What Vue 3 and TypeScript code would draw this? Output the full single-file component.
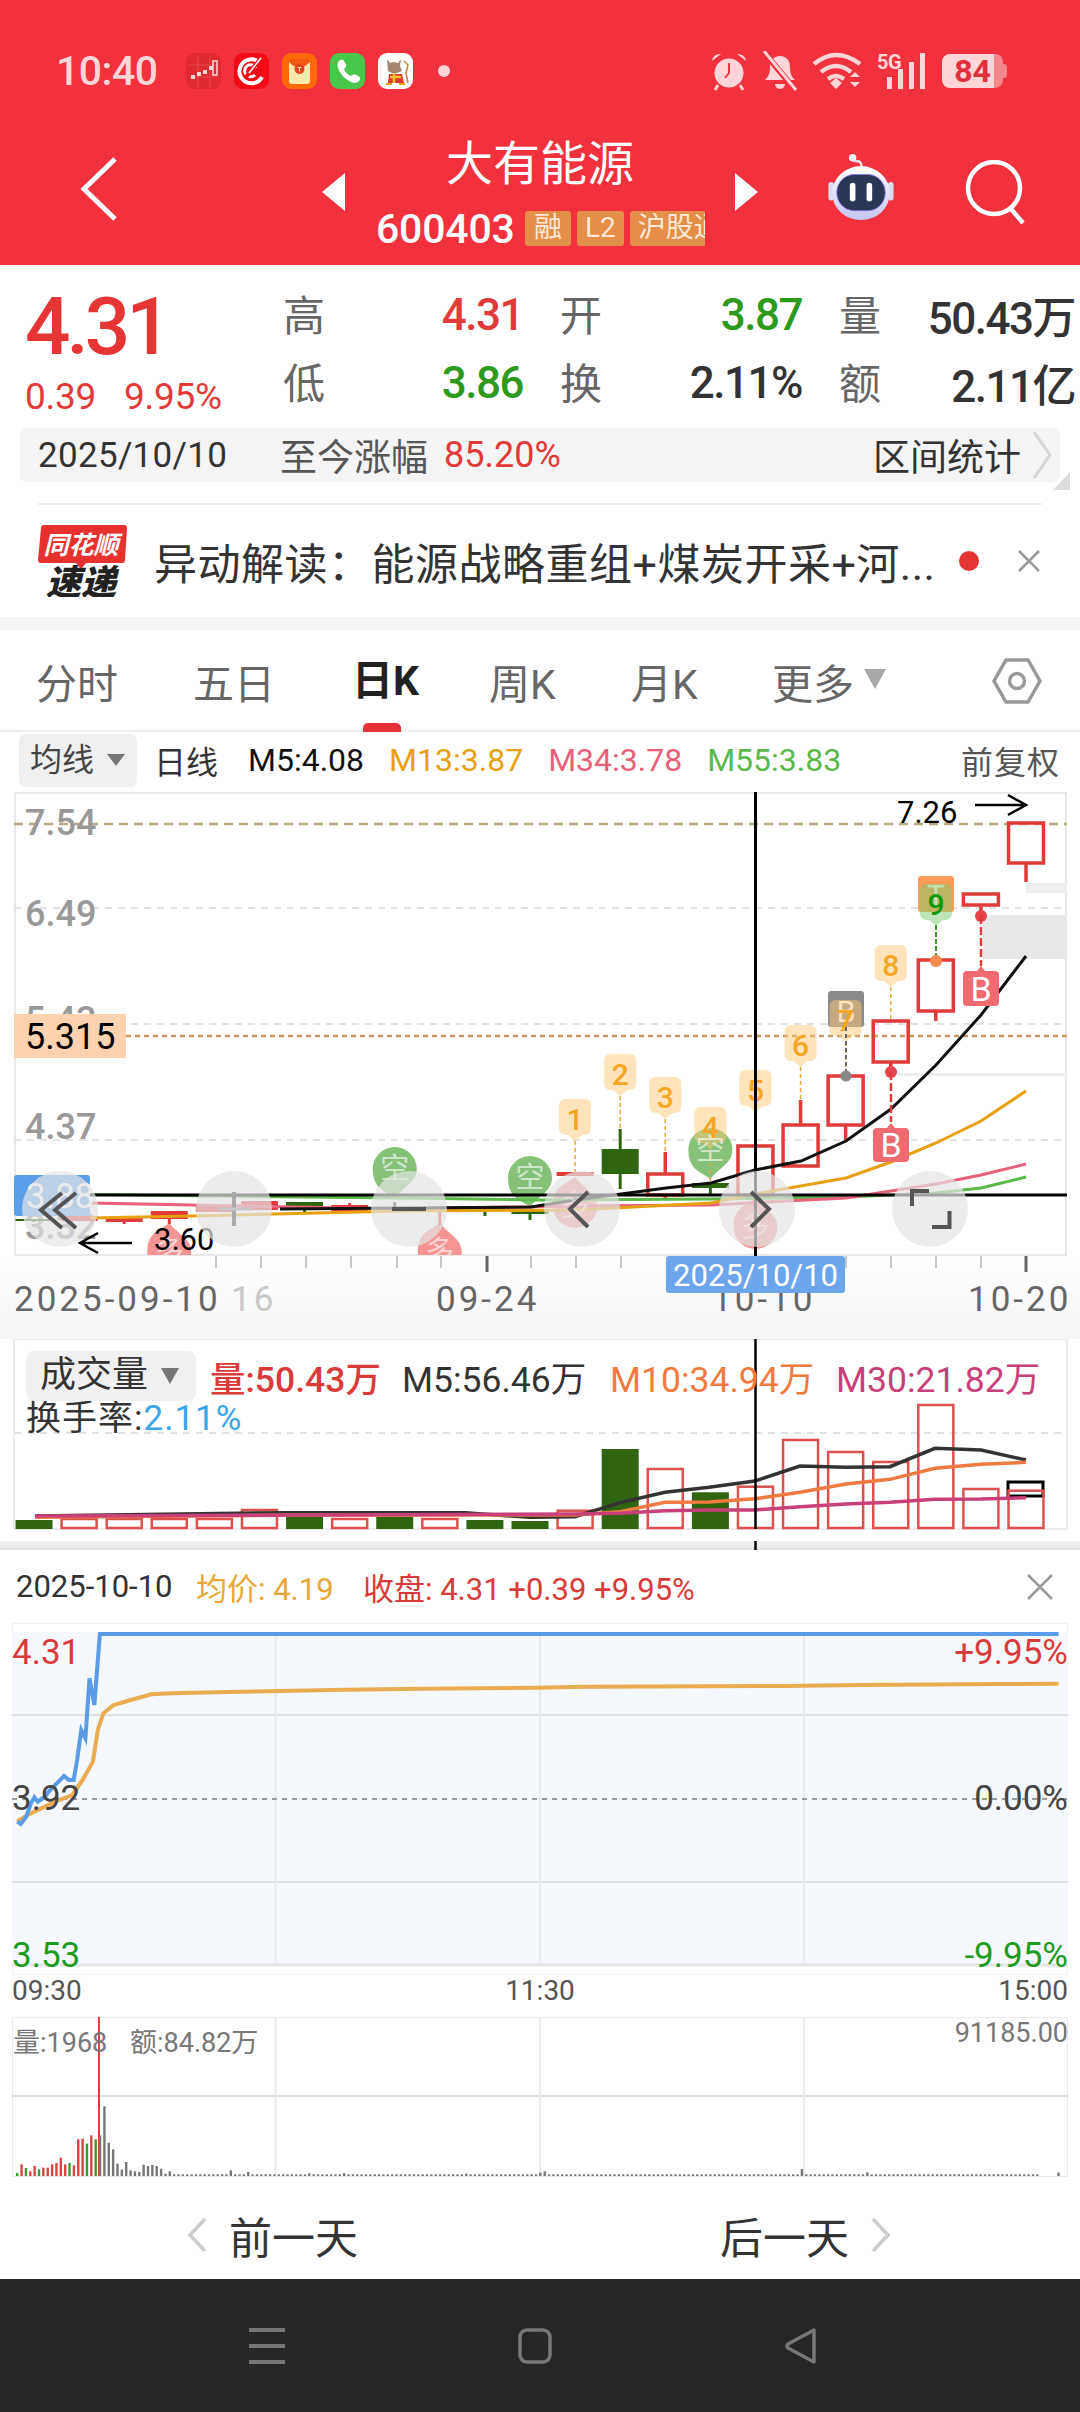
<script setup lang="ts">
type P = [number, number]
const pts = (a: P[]) => a.map((p) => p.join(',')).join(' ')
const cx = (i: number) => 1026 - 45.09 * (22 - i)

const grid = [
  { y: 908 },
  { y: 1024 },
  { y: 1140 },
]

const solid = [
  { i: 0, t: 1219, b: 1221, hi: 1219, lo: 1222, c: '#2f6410' },
  { i: 1, t: 1216, b: 1221, hi: 1216, lo: 1221, c: '#e03a3a' },
  { i: 2, t: 1218, b: 1222, hi: 1218, lo: 1224, c: '#e03a3a' },
  { i: 3, t: 1211, b: 1219, hi: 1211, lo: 1224, c: '#e03a3a' },
  { i: 4, t: 1205, b: 1212, hi: 1205, lo: 1212, c: '#e03a3a' },
  { i: 5, t: 1201, b: 1210, hi: 1201, lo: 1210, c: '#e03a3a' },
  { i: 6, t: 1202, b: 1206, hi: 1202, lo: 1213, c: '#2f6410' },
  { i: 7, t: 1205, b: 1211, hi: 1203, lo: 1211, c: '#e03a3a' },
  { i: 8, t: 1208, b: 1211, hi: 1202, lo: 1211, c: '#333333' },
  { i: 9, t: 1207, b: 1210, hi: 1207, lo: 1225, c: '#e03a3a' },
  { i: 10, t: 1206, b: 1209, hi: 1206, lo: 1216, c: '#2f6410' },
  { i: 11, t: 1211, b: 1214, hi: 1211, lo: 1220, c: '#2f6410' },
  { i: 12, t: 1172, b: 1176, hi: 1172, lo: 1176, c: '#e03a3a' },
  { i: 13, t: 1149, b: 1174, hi: 1129, lo: 1189, c: '#2f6410' },
  { i: 15, t: 1183, b: 1188, hi: 1183, lo: 1194, c: '#2f6410' },
].map((c) => ({ ...c, x: cx(c.i) }))

const hollow = [
  { i: 14, t: 1174, b: 1195, hi: 1152, lo: 1199 },
  { i: 16, t: 1146, b: 1195, hi: 1146, lo: 1195 },
  { i: 17, t: 1125, b: 1166, hi: 1100, lo: 1167 },
  { i: 18, t: 1076, b: 1125, hi: 1076, lo: 1142 },
  { i: 19, t: 1021, b: 1062, hi: 1021, lo: 1072 },
  { i: 20, t: 960, b: 1011, hi: 960, lo: 1021 },
  { i: 21, t: 894, b: 905, hi: 894, lo: 916 },
  { i: 22, t: 823, b: 863, hi: 823, lo: 882 },
].map((c) => ({ ...c, x: cx(c.i) }))

const ma5: P[] = [[280, 1209], [400, 1208], [531, 1207], [575, 1200], [621, 1194], [666, 1188], [711, 1183], [755, 1170], [801, 1161], [846, 1141], [891, 1109], [936, 1065], [981, 1015], [1026, 956]]
const ma13: P[] = [[90, 1218], [190, 1216], [400, 1211], [575, 1210], [711, 1203], [755, 1194], [846, 1178], [891, 1162], [936, 1143], [981, 1121], [1026, 1091]]
const ma34: P[] = [[90, 1203], [400, 1209], [575, 1206], [711, 1205], [846, 1198], [936, 1184], [981, 1175], [1026, 1164]]
const ma55: P[] = [[60, 1194], [300, 1197], [400, 1198], [540, 1200], [711, 1199], [846, 1197], [936, 1193], [981, 1188], [1026, 1177]]

const tagPath = (x: number, y: number) =>
  `M${x - 10} ${y}h20a6 6 0 0 1 6 6v24a6 6 0 0 1-6 6h-3l-7 6-7-6h-3a6 6 0 0 1-6-6v-24a6 6 0 0 1 6-6z`
const tags = [
  { n: '1', i: 12, y: 1099, to: 1172 },
  { n: '2', i: 13, y: 1054, to: 1129 },
  { n: '3', i: 14, y: 1077, to: 1152 },
  { n: '4', i: 15, y: 1107, to: 1183 },
  { n: '5', i: 16, y: 1070, to: 1146 },
  { n: '6', i: 17, y: 1025, to: 1100 },
  { n: '7', i: 18, y: 1000, to: 1076 },
  { n: '8', i: 19, y: 945, to: 1020 },
].map((t) => ({ ...t, x: cx(t.i), d: tagPath(cx(t.i), t.y) }))

const bubble = (x: number, y: number, r: number) =>
  `M${x - r} ${y}a${r} ${r} 0 1 1 ${2 * r} 0c0 ${r * 0.6}-${r * 0.6} ${r * 0.8}-${r} ${r + 7}c-${r * 0.4}-7-${r}-${r * 0.4}-${r}-${r + 7}z`
const duoPath = (x: number, y: number, r: number) =>
  `M${x - r} ${y}a${r} ${r} 0 1 0 ${2 * r} 0c0-${r * 0.6}-${r * 0.6}-${r * 0.8}-${r}-${r + 7}c-${r * 0.4} 7-${r} ${r * 0.4}-${r} ${r + 7}z`
const kong = [
  { x: cx(8), y: 1169 },
  { x: cx(11), y: 1178 },
  { x: cx(15), y: 1150 },
].map((b) => ({ ...b, d: bubble(b.x, b.y, 22) }))
const duo = [
  { x: cx(3), y: 1252 },
  { x: cx(9), y: 1252 },
  { x: cx(12), y: 1206 },
  { x: cx(16), y: 1227 },
].map((b) => ({ ...b, d: duoPath(b.x, b.y, 22) }))

const circles = [60, 234, 409, 582, 757, 930]

const volTops = [1520, 1519, 1519, 1519, 1519, 1510, 1516.7, 1519, 1516.7, 1519, 1520, 1521, 1510.7, 1449, 1469, 1492.3, 1486.7, 1440, 1452, 1462, 1405, 1489, 1490.7]
const volGreen = [0, 6, 8, 10, 11, 13, 15]
const volBars = volTops.map((t, i) => ({
  x: cx(i) - 18.5,
  y: t,
  h: 1529 - t,
  green: volGreen.includes(i),
}))
const vy = (z: number) => 1320 + z / 3
const volM5: P[] = ([[35, 588], [287, 578], [465, 578], [530, 592], [575, 590], [620, 548], [665, 517], [709, 502], [755, 483], [800, 438], [846, 442], [890, 440], [935, 385], [981, 390], [1026, 420]] as P[]).map(([x, z]) => [x, vy(z)])
const volM10: P[] = ([[35, 592], [300, 585], [530, 585], [575, 585], [620, 575], [665, 547], [709, 546], [755, 536], [800, 517], [846, 492], [890, 478], [935, 445], [981, 433], [1026, 427]] as P[]).map(([x, z]) => [x, vy(z)])
const volM30: P[] = ([[35, 588], [575, 582], [620, 580], [665, 572], [709, 570], [755, 570], [800, 560], [846, 552], [890, 547], [935, 538], [981, 537], [1026, 533]] as P[]).map(([x, z]) => [x, vy(z)])

const day = (a: P[]): P[] => a.map(([x, z]) => [x / 1.452, 1540 + z / 3])
const price = day([[25, 845], [30, 852], [38, 830], [45, 790], [50, 772], [55, 785], [65, 770], [75, 745], [85, 725], [93, 708], [100, 720], [107, 720], [112, 660], [118, 570], [124, 595], [130, 415], [137, 495], [145, 282], [1537, 282]])
const avg = day([[25, 845], [40, 825], [60, 805], [80, 785], [105, 765], [120, 720], [135, 665], [142, 570], [150, 520], [165, 495], [190, 480], [220, 463], [250, 460], [330, 456], [480, 450], [610, 446], [780, 443], [850, 440], [1140, 438], [1250, 435], [1450, 432], [1537, 431]])

const firstTops = [518, 492, 503, 513, 497, 507, 502, 502, 492, 488, 472, 492, 488, 495, 417, 415, 430, 405, 417, 405, 318, 427, 447, 490, 508, 485, 510, 513, 515, 493, 497, 494, 497, 505, 520, 513]
const firstCol = 'grgrrgrrrrrrgrrrgrg'
const bumps: Record<number, number> = { 333: 510, 358: 515, 452: 519, 497: 519, 680: 520, 787: 517, 793: 513, 1165: 506, 1258: 516 }
const dayBars: { x: number; h: number; c: string }[] = []
for (let i = 0; i < 235; i++) {
  const zx = 25 + i * 6.33
  if (zx > 1520) break
  let top = 522
  if (i < firstTops.length) top = firstTops[i]
  for (const k of Object.keys(bumps)) {
    if (Math.abs(Number(k) - zx) < 3.2) top = bumps[Number(k)]
  }
  const ch = firstCol[i]
  dayBars.push({
    x: zx / 1.452 - 1.2,
    h: (527 - top) / 3,
    c: ch === 'g' ? '#3b9a2d' : ch === 'r' ? '#d94444' : '#777777',
  })
}
dayBars.push({ x: 1537 / 1.452 - 1.2, h: 3.5, c: '#777777' })
</script>

<template>
  <div class="page">
    <header class="head">
      <div class="status">
        <div class="status-left">
          <span class="time">10:40</span>
          <svg class="app first" viewBox="0 0 35 36">
            <rect width="35" height="36" rx="9" fill="#df2a30" />
            <path d="M3 12h30M3 24h30M12 2v32M24 2v32" stroke="#e8474c" stroke-width="1" />
            <path d="M5 24h4M11 21h4M17 19h4M23 15h4" stroke="#ffd6d6" stroke-width="4" />
            <rect x="27" y="8" width="4" height="14" fill="none" stroke="#ffd6d6" stroke-width="1.5" />
          </svg>
          <svg class="app" viewBox="0 0 35 36">
            <rect width="35" height="36" rx="9" fill="#f40a14" />
            <path d="M25 9a12 12 0 1 0 3 15" fill="none" stroke="#fff" stroke-width="4" />
            <path d="M22 15a6 6 0 1 0-1 7" fill="none" stroke="#fff" stroke-width="3" />
            <path d="M12 24L27 5" stroke="#f40a14" stroke-width="4" />
            <path d="M15 20L27 5" stroke="#fff" stroke-width="1.6" />
          </svg>
          <svg class="app" viewBox="0 0 35 36">
            <rect width="35" height="36" rx="9" fill="#ff6a06" />
            <rect x="7" y="6" width="21" height="25" rx="3" fill="#ffe9ad" />
            <path d="M7 9q10 11 21 0V8a2 2 0 0 0-2-2H9a2 2 0 0 0-2 2z" fill="#f65a12" />
            <circle cx="17.5" cy="16" r="5" fill="#e8421a" />
            <path d="M15.5 14.500h4M17.500 14.500v4" stroke="#ffe9ad" stroke-width="1.200" />
          </svg>
          <svg class="app" viewBox="0 0 35 36">
            <rect width="35" height="36" rx="9" fill="#48c74a" />
            <path d="M9 8c2-2 4-2 5 0l2 4c.5 1 0 2-1 3l-1 1c1 3 4 6 7 7l1.500-1c1-1 2-1 3-.5l3.500 2c1.500 1 1.500 3 0 4.500-2 2-5 2.500-8 1-6-3-11-8-13-14-1-3-.5-5.500 1-7z" fill="#fff" />
          </svg>
          <svg class="app" viewBox="0 0 35 36">
            <rect width="35" height="36" rx="9" fill="#fff" />
            <path d="M9 6l3 4 3-1 5 1 3-4-1 7 2 5-8 3-6-3z" fill="#a28570" />
            <path d="M11 21h13l2 9H10z" fill="#e0352a" />
            <path d="M12 24h11M16 20v10" stroke="#f5c431" stroke-width="2.500" />
            <path d="M26 8l4 4-2 8 2 10" stroke="#b98a3a" stroke-width="1.500" fill="none" />
            <path d="M8 31h6M21 31h6" stroke="#e8a020" stroke-width="2" />
          </svg>
          <span class="sdot"></span>
        </div>
        <div class="status-right">
          <svg class="si alarm" viewBox="0 0 38 40">
            <circle cx="19" cy="22" r="14.500" fill="#ffd5d8" />
            <path d="M19 12v10l-4 5" stroke="#f1313c" stroke-width="2" fill="none" />
            <path d="M2 10a8 8 0 0 1 9-7zM36 10a8 8 0 0 0-9-7z" fill="#ffd5d8" />
            <path d="M8 34l-3 5M30 34l3 5" stroke="#ffd5d8" stroke-width="3" />
          </svg>
          <svg class="si bell" viewBox="0 0 36 40">
            <path d="M8 16c0-7 4-11 10-11s10 4 10 11c0 7 2 10 5 13H3c3-3 5-6 5-13z" fill="#ffd5d8" />
            <path d="M13 33a5 5 0 0 0 10 0z" fill="#ffd5d8" />
            <path d="M1 0l33 40" stroke="#f1313c" stroke-width="6" />
            <path d="M2 0l32 39" stroke="#ffd5d8" stroke-width="3" />
          </svg>
          <svg class="si wifi" viewBox="0 0 50 38">
            <path d="M2 12q22-18 46 0M9 20q15-12 30 0M16 27q8-6 16 0" fill="none" stroke="#ffd5d8" stroke-width="4.500" />
            <path d="M18 31l6-5 6 5-6 6z" fill="#ffd5d8" />
            <path d="M38 25l5-5 5 5zM38 30l5 5 5-5z" fill="#ffd5d8" />
          </svg>
          <div class="net">
            <span class="five">5G</span>
            <svg class="bars" viewBox="0 0 48 36">
              <rect x="10" y="24" width="5" height="12" fill="#ffd5d8" />
              <rect x="21" y="16" width="5" height="20" fill="#ffd5d8" />
              <rect x="32" y="9" width="5" height="27" fill="#ffd5d8" />
              <rect x="43" y="0" width="5" height="36" fill="#ffd5d8" />
            </svg>
          </div>
          <div class="batt">84</div>
        </div>
      </div>
      <div class="nav">
        <svg class="back" viewBox="0 0 38 64">
          <path d="M35 2L4 32l31 30" fill="none" stroke="#fff" stroke-width="5" />
        </svg>
        <svg class="tri-l" viewBox="0 0 23 38"><path d="M23 0v38L0 19z" fill="#fff" /></svg>
        <div class="center">
          <div class="title">大有能源</div>
          <div class="code-row">
            <span class="code">600403</span>
            <span class="tag">融</span>
            <span class="tag">L2</span>
            <span class="tag">沪股通</span>
          </div>
        </div>
        <svg class="tri-r" viewBox="0 0 23 38"><path d="M0 0v38l23-19z" fill="#fff" /></svg>
        <svg class="robot" viewBox="0 0 72 72">
          <defs>
            <linearGradient id="rb" x1="0" y1="0" x2="0" y2="1">
              <stop offset="0" stop-color="#ffffff" />
              <stop offset="1" stop-color="#c4c6f2" />
            </linearGradient>
          </defs>
          <path d="M30 8q-6-4-3-7M30 8q6-2 7 6" fill="none" stroke="#e8e8f4" stroke-width="2.500" />
          <circle cx="27" cy="4" r="4" fill="#eeeef8" />
          <rect x="1" y="30" width="6" height="20" rx="3" fill="#dcdcf0" />
          <rect x="65" y="30" width="6" height="20" rx="3" fill="#dcdcf0" />
          <ellipse cx="36" cy="42" rx="31" ry="29" fill="url(#rb)" />
          <rect x="10" y="22" width="52" height="39" rx="19" fill="#2a3656" stroke="#8f7ae8" stroke-width="1" />
          <rect x="24" y="31" width="6" height="20" rx="3" fill="#fff" />
          <rect x="42" y="31" width="6" height="20" rx="3" fill="#fff" />
        </svg>
        <svg class="search" viewBox="0 0 62 64">
          <circle cx="30" cy="28" r="26" fill="none" stroke="#fff" stroke-width="4.500" />
          <path d="M47 49l12 14" stroke="#fff" stroke-width="4.500" />
        </svg>
      </div>
    </header>

    <section class="quote">
      <div class="summary">
        <div class="now">
          <div class="big">4.31</div>
          <div class="chg"><span>0.39</span><span>9.95%</span></div>
        </div>
        <div class="stats">
          <div class="cell"><span class="lb">高</span><span class="val red">4.31</span></div>
          <div class="cell"><span class="lb">开</span><span class="val green">3.87</span></div>
          <div class="cell"><span class="lb">量</span><span class="val">50.43万</span></div>
          <div class="cell"><span class="lb">低</span><span class="val green">3.86</span></div>
          <div class="cell"><span class="lb">换</span><span class="val">2.11%</span></div>
          <div class="cell"><span class="lb">额</span><span class="val">2.11亿</span></div>
        </div>
      </div>
      <div class="range">
        <span class="r-date">2025/10/10</span>
        <span class="r-lb">至今涨幅</span>
        <span class="r-pct">85.20%</span>
        <span class="r-stat">区间统计</span>
        <svg class="r-chev" viewBox="0 0 20 50"><path d="M2 2l16 23L2 48" fill="none" stroke="#d6d6d6" stroke-width="3" /></svg>
        <span class="r-corner"></span>
      </div>
      <div class="rule"></div>
      <div class="news">
        <svg class="logo" viewBox="0 0 90 72">
          <path d="M6 0h80q3 0 3 3l-2 32q0 3-3 3H48l-5 6-5-6H3q-3 0-3-3L3 3q0-3 3-3z" fill="#e5322f" />
          <text class="logo-a" x="43" y="29" text-anchor="middle">同花顺</text>
          <text class="logo-b" x="43" y="70" text-anchor="middle">速递</text>
        </svg>
        <span class="news-text">异动解读：能源战略重组+煤炭开采+河...</span>
        <span class="news-dot"></span>
        <svg class="news-x" viewBox="0 0 24 24"><path d="M2 2l20 20M22 2L2 22" stroke="#999" stroke-width="2.500" /></svg>
      </div>
    </section>
    <div class="band"></div>

    <nav class="tabs">
      <span class="tab">分时</span>
      <span class="tab">五日</span>
      <span class="tab on">日K<i class="under"></i></span>
      <span class="tab">周K</span>
      <span class="tab">月K</span>
      <span class="tab">更多<i class="more-tri"></i></span>
      <svg class="hex" viewBox="0 0 50 46">
        <path d="M14 2h22l12 21-12 21H14L2 23z" fill="none" stroke="#999" stroke-width="3.500" />
        <circle cx="25" cy="23" r="7.500" fill="none" stroke="#999" stroke-width="3.500" />
      </svg>
    </nav>

    <div class="legend">
      <span class="ma-btn">均线<i class="dd"></i></span>
      <span class="lg-day">日线</span>
      <span class="lg m5">M5:4.08</span>
      <span class="lg m13">M13:3.87</span>
      <span class="lg m34">M34:3.78</span>
      <span class="lg m55">M55:3.83</span>
      <span class="fq">前复权</span>
    </div>

    <svg class="kchart" viewBox="0 788 1080 551">
      <defs>
        <linearGradient id="axisbg" x1="0" y1="0" x2="0" y2="1">
          <stop offset="0" stop-color="#ffffff" />
          <stop offset="1" stop-color="#f6f6f6" />
        </linearGradient>
        <clipPath id="plot"><rect x="14" y="792" width="1053" height="463" /></clipPath>
      </defs>
      <rect x="0" y="1255" width="1080" height="84" fill="url(#axisbg)" />
      <rect x="15" y="793" width="1051" height="462" fill="#fff" stroke="#e8e8e8" stroke-width="2" />
      <rect x="983" y="915" width="84" height="44" fill="#e8e8e8" />
      <rect x="1026" y="883" width="41" height="10" fill="#eeeeee" />
      <rect x="895" y="1073" width="172" height="3" fill="#eeeeee" />
      <line v-for="g in grid" :key="g.y" x1="14" x2="1067" :y1="g.y" :y2="g.y" class="dash-g" />
      <line x1="14" x2="1067" y1="824" y2="824" class="dash-top" />
      <text class="yl" x="25" y="835">7.54</text>
      <text class="yl" x="25" y="926">6.49</text>
      <text class="yl" x="25" y="1032">5.43</text>
      <text class="yl" x="25" y="1139">4.37</text>
      <text class="yl" x="25" y="1239">3.32</text>
      <line x1="126" x2="1067" y1="1036" y2="1036" class="dash-or" />
      <rect x="14" y="1014" width="112" height="44" fill="#ffd3b0" />
      <text class="y-hi" x="25" y="1049">5.315</text>

      <g clip-path="url(#plot)">
        <path v-for="k in kong" :key="k.x" :d="k.d" fill="#85c277" />
        <path v-for="d in duo" :key="d.x" :d="d.d" fill="#f49494" />

        <g v-for="c in solid" :key="c.i">
          <line :x1="c.x" :x2="c.x" :y1="c.hi" :y2="c.lo" :stroke="c.c" stroke-width="3" />
          <rect :x="c.x - 18.500" :y="c.t" width="37" :height="c.b - c.t" :fill="c.c" />
        </g>
        <g v-for="c in hollow" :key="c.i">
          <line :x1="c.x" :x2="c.x" :y1="c.hi" :y2="c.t" stroke="#e03a3a" stroke-width="3.500" />
          <line :x1="c.x" :x2="c.x" :y1="c.b" :y2="c.lo" stroke="#e03a3a" stroke-width="3.500" />
          <rect :x="c.x - 17.500" :y="c.t" width="35" :height="c.b - c.t" fill="none" stroke="#e03a3a" stroke-width="3.500" />
        </g>

        <polyline :points="pts(ma55)" class="ln" stroke="#5cb84a" />
        <polyline :points="pts(ma34)" class="ln" stroke="#e8607a" />
        <polyline :points="pts(ma13)" class="ln" stroke="#e8a010" />
        <polyline :points="pts(ma5)" class="ln" stroke="#111" />

        <rect x="828" y="991" width="36" height="36" rx="3" fill="#8a8a8a" />
        <text class="mk-w" x="846" y="1022" text-anchor="middle">B</text>
        <rect x="918" y="876" width="36" height="36" rx="3" fill="#ff9c55" />
        <text class="mk-w" x="936" y="906" text-anchor="middle">T</text>
        <g v-for="t in tags" :key="t.n">
          <line :x1="t.x" :x2="t.x" :y1="t.y + 42" :y2="t.to" class="lead" />
          <path :d="t.d" fill="#ffc878" fill-opacity="0.5" />
          <text class="mk-or" :x="t.x" :y="t.y + 31" text-anchor="middle">{{ t.n }}</text>
        </g>
        <line x1="846" x2="846" y1="1027" y2="1076" stroke="#666" stroke-width="2" stroke-dasharray="4 3" />
        <circle cx="846" cy="1076" r="5.500" fill="#888" />
        <path :d="tagPath(936, 884)" fill="#7ccb72" fill-opacity="0.5" />
        <text class="mk-g" x="936" y="915" text-anchor="middle">9</text>
        <line x1="936" x2="936" y1="925" y2="960" class="lead2" />
        <circle cx="936" cy="961" r="6" fill="#f58a4a" />

        <circle cx="891" cy="1072" r="6" fill="#e8434a" />
        <line x1="891" x2="891" y1="1072" y2="1122" stroke="#e03a3a" stroke-width="2.500" stroke-dasharray="8 3" />
        <circle cx="981" cy="916" r="6" fill="#e8434a" />
        <line x1="981" x2="981" y1="916" y2="966" stroke="#e03a3a" stroke-width="2.500" stroke-dasharray="8 3" />
        <path d="M877 1128h10l4-5 4 5h10q4 0 4 4v26q0 4-4 4h-28q-4 0-4-4v-26q0-4 4-4z" fill="#ef6b70" />
        <text class="mk-b" x="891" y="1157" text-anchor="middle">B</text>
        <path d="M967 971h10l4-5 4 5h10q4 0 4 4v27q0 4-4 4h-28q-4 0-4-4v-27q0-4 4-4z" fill="#ef6b70" />
        <text class="mk-b" x="981" y="1001" text-anchor="middle">B</text>

        <text v-for="k in kong" :key="'k' + k.x" class="bb" :x="k.x" :y="k.y + 10" text-anchor="middle">空</text>
        <text v-for="d in duo" :key="'d' + d.x" class="bb" :x="d.x" :y="d.y + 10" text-anchor="middle">多</text>
      </g>

      <rect x="14" y="1175" width="76" height="41" rx="3" fill="#5b9fe8" />
      <text class="y-box" x="26" y="1208">3.88</text>
      <line x1="90" x2="1067" y1="1195" y2="1195" stroke="#000" stroke-width="3" />
      <line x1="755.500" x2="755.500" y1="792" y2="1256" stroke="#000" stroke-width="3" />

      <text class="arw" x="897" y="823">7.26</text>
      <path d="M975 805h50M1008 795l18 10-18 10" fill="none" stroke="#000" stroke-width="2.500" />
      <text class="arw" x="154" y="1250">3.60</text>
      <path d="M132 1243H81M98 1233l-18 10 18 10" fill="none" stroke="#000" stroke-width="2.500" />

      <circle v-for="c in circles" :key="c" :cx="c" cy="1209" r="38" fill="#e4e4e4" fill-opacity="0.7" />
      <path d="M62 1193l-21 17 21 18M76 1193l-21 17 21 18" class="ic" />
      <path d="M234 1192v34" class="ic-l" />
      <path d="M218 1209h33" class="ic-l2" />
      <path d="M392 1209h34" class="ic" />
      <path d="M588 1192l-18 17 18 18" class="ic" />
      <path d="M751 1192l18 17-18 18" class="ic" />
      <path d="M912 1206v-15h17M932 1227h17.500v-16" class="ic" />

      <g class="ticks">
        <line x1="216" x2="216" y1="1256" y2="1268" />
        <line x1="261" x2="261" y1="1256" y2="1268" />
        <line x1="306" x2="306" y1="1256" y2="1268" />
        <line x1="351" x2="351" y1="1256" y2="1268" />
        <line x1="397" x2="397" y1="1256" y2="1268" />
        <line x1="441" x2="441" y1="1256" y2="1268" />
        <line x1="531" x2="531" y1="1256" y2="1268" />
        <line x1="576" x2="576" y1="1256" y2="1268" />
        <line x1="621" x2="621" y1="1256" y2="1268" />
        <line x1="846" x2="846" y1="1256" y2="1268" />
        <line x1="891" x2="891" y1="1256" y2="1268" />
        <line x1="936" x2="936" y1="1256" y2="1268" />
        <line x1="981" x2="981" y1="1256" y2="1268" />
      </g>
      <line x1="487" x2="487" y1="1256" y2="1272" stroke="#666" stroke-width="3" />
      <line x1="1026" x2="1026" y1="1256" y2="1272" stroke="#666" stroke-width="3" />
      <text class="xl" x="14" y="1311">2025-09-10</text>
      <text class="xl faint" x="231" y="1311">16</text>
      <text class="xl" x="436" y="1311">09-24</text>
      <text class="xl" x="712" y="1311">10-10</text>
      <text class="xl" x="968" y="1311">10-20</text>
      <rect x="666" y="1256" width="179" height="37" rx="3" fill="#6ba5ec" />
      <text class="xbox" x="755.500" y="1286" text-anchor="middle">2025/10/10</text>
    </svg>

    <section class="vol">
      <svg class="volchart" viewBox="0 1339 1080 211">
        <defs>
          <linearGradient id="volfade" x1="0" y1="0" x2="0" y2="1">
            <stop offset="0" stop-color="#f4f4f4" />
            <stop offset="1" stop-color="#e2e2e2" />
          </linearGradient>
        </defs>
        <rect x="14" y="1339" width="1053" height="190" fill="#fff" stroke="#ececec" stroke-width="2" />
        <line x1="14" x2="1067" y1="1433" y2="1433" class="dash-g" />
        <rect x="0" y="1541" width="1080" height="9" fill="url(#volfade)" />
        <rect x="1008" y="1482" width="35" height="14" fill="none" stroke="#000" stroke-width="3" />
        <template v-for="(b, i) in volBars" :key="i">
          <rect v-if="b.green" :x="b.x" :y="b.y" width="37" :height="b.h" fill="#2f6410" />
          <rect v-else :x="b.x + 1" :y="b.y" width="35" :height="b.h - 1" fill="none" stroke="#dc5050" stroke-width="2.500" />
        </template>
        <polyline :points="pts(volM5)" class="vln" stroke="#333" />
        <polyline :points="pts(volM10)" class="vln" stroke="#f07a40" />
        <polyline :points="pts(volM30)" class="vln" stroke="#c8407a" />
        <line x1="755.500" x2="755.500" y1="1339" y2="1529" stroke="#000" stroke-width="2.500" />
        <line x1="755.500" x2="755.500" y1="1541" y2="1550" stroke="#000" stroke-width="2.500" />
      </svg>
      <div class="vol-legend">
        <div class="vl-row">
          <span class="vl-btn">成交量<i class="dd2"></i></span>
          <span class="v-red">量:50.43万</span>
          <span class="v-dark">M5:56.46万</span>
          <span class="v-or">M10:34.94万</span>
          <span class="v-mg">M30:21.82万</span>
        </div>
        <div class="vl-turn">换手率:<span class="v-bl">2.11%</span></div>
      </div>
    </section>

    <section class="sheet">
      <div class="sheet-head">
        <span class="sd">2025-10-10</span>
        <span class="sa">均价: 4.19</span>
        <span class="sc">收盘: 4.31 +0.39 +9.95%</span>
        <svg class="sx" viewBox="0 0 26 26"><path d="M1 1l24 24M25 1L1 25" stroke="#999" stroke-width="2.500" /></svg>
      </div>
      <svg class="daychart" viewBox="0 1623 1080 567">
        <rect x="12.500" y="1623.500" width="1055" height="351" fill="#fff" stroke="#f0f0f0" />
        <rect x="12" y="1632" width="1056" height="333" fill="#f5f8fd" />
        <line x1="12" x2="1068" y1="1965" y2="1965" stroke="#e4e4e4" stroke-width="3" />
        <line x1="12" x2="1068" y1="1715" y2="1715" class="dg" />
        <line x1="12" x2="1068" y1="1882" y2="1882" class="dg" />
        <line x1="275.500" x2="275.500" y1="1632" y2="1965" class="dg2" />
        <line x1="540" x2="540" y1="1632" y2="1965" class="dg2" />
        <line x1="804" x2="804" y1="1632" y2="1965" class="dg2" />
        <line x1="12" x2="1068" y1="1799" y2="1799" stroke="#999" stroke-width="2" stroke-dasharray="5 5" />
        <polyline :points="pts(avg)" class="l-avg" />
        <polyline :points="pts(price)" class="l-price" />
        <text class="dl" x="12" y="1664" fill="#d93a3a">4.31</text>
        <text class="dl" x="12" y="1810" fill="#444">3.92</text>
        <text class="dl" x="12" y="1967" fill="#1e9a1e">3.53</text>
        <text class="dl" x="1068" y="1664" fill="#d93a3a" text-anchor="end">+9.95%</text>
        <text class="dl" x="1068" y="1810" fill="#444" text-anchor="end">0.00%</text>
        <text class="dl" x="1068" y="1967" fill="#1e9a1e" text-anchor="end">-9.95%</text>
        <text class="tl" x="12" y="2000">09:30</text>
        <text class="tl" x="540" y="2000" text-anchor="middle">11:30</text>
        <text class="tl" x="1068" y="2000" text-anchor="end">15:00</text>

        <rect x="12.500" y="2017.500" width="1055" height="159" fill="#fff" stroke="#ececec" />
        <line x1="12" x2="1068" y1="2096" y2="2096" class="dg" />
        <line x1="275.500" x2="275.500" y1="2017" y2="2176" class="dg2" />
        <line x1="540" x2="540" y1="2017" y2="2176" class="dg2" />
        <line x1="804" x2="804" y1="2017" y2="2176" class="dg2" />
        <rect v-for="(b, i) in dayBars" :key="i" :x="b.x" :y="2176 - b.h" width="2.400" :height="b.h" :fill="b.c" />
        <line x1="99" x2="99" y1="2017" y2="2176" stroke="#e04040" stroke-width="2" />
        <text class="vt" x="13" y="2052">量:1968</text>
        <text class="vt" x="130" y="2052">额:84.82万</text>
        <text class="vt" x="1068" y="2042" text-anchor="end">91185.00</text>
      </svg>
      <div class="pager">
        <svg class="pchev" viewBox="0 0 20 34"><path d="M18 1L3 17l15 16" fill="none" stroke="#ccc" stroke-width="3.500" /></svg>
        <span class="ptext">前一天</span>
        <span class="ptext pnext">后一天</span>
        <svg class="pchev" viewBox="0 0 20 34"><path d="M2 1l15 16L2 33" fill="none" stroke="#ccc" stroke-width="3.500" /></svg>
      </div>
    </section>

    <footer class="sysnav">
      <svg class="n1" viewBox="0 0 36 36"><path d="M0 2h36M0 18h36M0 34h36" stroke="#777" stroke-width="4" /></svg>
      <svg class="n2" viewBox="0 0 34 36"><rect x="2" y="2" width="30" height="32" rx="7" fill="none" stroke="#777" stroke-width="3.500" /></svg>
      <svg class="n3" viewBox="0 0 32 36"><path d="M29 2v32L3 20q-2-2 0-4z" fill="none" stroke="#777" stroke-width="3.500" stroke-linejoin="round" /></svg>
    </footer>
  </div>
</template>

<style scoped>
.page {
  width: 1080px;
  height: 2412px;
  overflow: hidden;
  background: #fff;
  font-family: Roboto, "Noto Sans CJK SC", sans-serif;
  color: #333;
}
i { font-style: normal; }
svg { display: block; flex: none; }

.head { height: 265px; background: #f1313c; overflow: hidden; }
.status {
  display: flex;
  justify-content: space-between;
  align-items: center;
  height: 40px;
  margin-top: 51px;
  padding: 0 73px 0 56px;
}
.status-left, .status-right { display: flex; align-items: center; }
.time { width: 130px; font-size: 41px; font-weight: 500; color: #ffd5d8; letter-spacing: -0.5px; }
.app { width: 35px; height: 36px; margin-right: 13px; }
.sdot { width: 12px; height: 12px; border-radius: 50%; background: #ffd5d8; margin-left: 12px; }
.si.alarm { width: 38px; height: 40px; margin-right: 14px; }
.si.bell { width: 36px; height: 40px; margin-right: 14px; }
.si.wifi { width: 50px; height: 38px; margin-right: 15px; }
.net { position: relative; width: 48px; height: 38px; margin-right: 17px; }
.five { position: absolute; left: 0; top: 0; font-size: 20px; font-weight: 700; color: #ffd5d8; line-height: 20px; letter-spacing: -0.5px; }
.bars { position: absolute; left: 0; top: 1px; width: 48px; height: 36px; }
.batt {
  position: relative;
  width: 61px;
  height: 34px;
  margin-right: 4px;
  border-radius: 8px;
  background: linear-gradient(90deg, #ffd5d8 86%, #f7858c 86%);
  color: #e2303a;
  font-size: 32px;
  font-weight: 700;
  line-height: 35px;
  text-align: center;
}
.batt::after {
  content: "";
  position: absolute;
  right: -4px;
  top: 10px;
  width: 4px;
  height: 14px;
  border-radius: 0 3px 3px 0;
  background: #f7858c;
}
.nav { display: flex; height: 124px; margin-top: 49px; }
.back { width: 38px; height: 64px; margin: 17px 0 0 80px; }
.tri-l { width: 23px; height: 38px; margin: 33px 0 0 204px; }
.center { width: 390px; }
.title { font-size: 47px; line-height: 47px; text-align: center; color: #fff; height: 71px; }
.code-row { display: flex; align-items: center; width: 329px; margin-left: 31px; height: 35px; overflow: hidden; white-space: nowrap; }
.code { width: 149px; flex: none; font-size: 41px; font-weight: 500; color: #fff; letter-spacing: -0.2px; }
.tag {
  flex: none;
  height: 35px;
  padding: 0 8px;
  min-width: 30px;
  margin-right: 6px;
  border-radius: 3px;
  background: #e58e4a;
  color: #ffe8d6;
  font-size: 28px;
  line-height: 34px;
  text-align: center;
}
.tri-r { width: 23px; height: 38px; margin: 33px 0 0 0; }
.robot { width: 72px; height: 67px; margin: 14px 0 0 67px; }
.search { width: 62px; height: 64px; margin: 20px 0 0 67px; }

.quote { height: 352px; overflow: hidden; }
.summary { display: flex; padding-top: 16px; height: 136px; box-sizing: content-box; }
.now { width: 283px; padding-left: 25px; box-sizing: border-box; flex: none; }
.big { font-size: 80px; line-height: 66px; font-weight: 500; color: #e53535; margin-top: 13px; letter-spacing: -4px; }
.chg { display: flex; gap: 28px; font-size: 37px; line-height: 40px; margin-top: 17px; color: #e03a3a; letter-spacing: -0.3px; }
.stats { display: grid; grid-template-columns: 240px 242px 236px; column-gap: 37px; grid-auto-rows: 68px; }
.cell { display: flex; justify-content: space-between; align-items: center; }
.lb { font-size: 42px; color: #666; margin-bottom: 5px; }
.val { font-size: 44px; font-weight: 500; color: #333; letter-spacing: -1.5px; white-space: nowrap; }
.red { color: #e03a3a; }
.green { color: #2d9a1e; }

.range {
  position: relative;
  display: flex;
  align-items: center;
  height: 54px;
  margin: 11px 20px 0;
  padding-left: 18px;
  border-radius: 6px;
  background: #f4f4f4;
  font-size: 36px;
}
.r-date { width: 242px; flex: none; font-size: 35px; color: #333; letter-spacing: 0.3px; }
.r-lb { width: 164px; flex: none; font-size: 37px; color: #555; }
.r-pct { color: #e03a3a; }
.r-stat { margin-left: auto; font-size: 37px; color: #333; }
.r-chev { width: 20px; height: 50px; margin: 0 8px 0 11px; }
.r-corner {
  position: absolute;
  right: -10px;
  bottom: -8px;
  width: 0;
  height: 0;
  border-left: 17px solid transparent;
  border-bottom: 18px solid #dcdcdc;
}
.rule { height: 2px; margin: 21px 38px 0; background: #eeeeee; }
.news { display: flex; align-items: center; height: 111px; padding-left: 38px; }
.logo { width: 90px; height: 72px; }
.logo-a { font-size: 25px; font-weight: 700; font-style: italic; fill: #fff; }
.logo-b { font-size: 35px; font-weight: 900; font-style: italic; fill: #222; }
.news-text { width: 780px; margin-left: 26px; flex: none; font-size: 43px; letter-spacing: 0.5px; color: #333; white-space: nowrap; }
.news-dot { width: 20px; height: 20px; border-radius: 50%; background: #e53535; margin-left: 25px; flex: none; }
.news-x { width: 24px; height: 24px; margin-left: 38px; }
.band { height: 13px; background: #f4f4f4; }

.tabs {
  display: grid;
  grid-template-columns: 157px 159px 137px 142px 141px 220px 50px;
  align-items: center;
  height: 102px;
  padding-left: 36px;
  border-bottom: 2px solid #eeeeee;
  box-sizing: border-box;
}
.tab { position: relative; font-size: 41px; color: #666; white-space: nowrap; }
.tab.on { font-weight: 700; color: #222; align-self: stretch; line-height: 102px; }
.under { position: absolute; left: 11px; bottom: 0; width: 38px; height: 9px; border-radius: 5px 5px 0 0; background: #e5323a; }
.more-tri {
  position: absolute;
  left: 92px;
  top: 18px;
  width: 0;
  height: 0;
  border-left: 11px solid transparent;
  border-right: 11px solid transparent;
  border-top: 20px solid #a8a8a8;
}
.hex { width: 50px; height: 46px; }

.legend { display: flex; align-items: center; gap: 25px; height: 56px; padding: 0 20px 0 19px; font-size: 32px; white-space: nowrap; }
.ma-btn { position: relative; width: 118px; height: 53px; box-sizing: border-box; padding-left: 11px; border-radius: 7px; background: #f0f0f0; color: #444; line-height: 52px; font-size: 32px; }
.dd { position: absolute; right: 12px; top: 20px; width: 0; height: 0; border-left: 9px solid transparent; border-right: 9px solid transparent; border-top: 12px solid #777; }
.lg-day { color: #333; margin: 0 5px 0 -8px; }
.m5 { color: #111; }
.m13 { color: #e8a010; }
.m34 { color: #e8607a; }
.m55 { color: #5cb84a; }
.fq { margin-left: auto; color: #555; letter-spacing: 1px; }

.kchart { width: 1080px; height: 551px; }
.dash-g { stroke: #e2e2e2; stroke-width: 2; stroke-dasharray: 7 6; }
.dash-top { stroke: #bba880; stroke-width: 2.5; stroke-dasharray: 9 6; }
.dash-or { stroke: #c89b62; stroke-width: 2.5; stroke-dasharray: 5 4; }
.yl { font-size: 36px; font-weight: 500; fill: #999; }
.y-hi { font-size: 36px; fill: #000; }
.y-box { font-size: 35px; fill: #fff; }
.ln { fill: none; stroke-width: 3; }
.lead { stroke: #e8a63c; stroke-width: 1.5; stroke-dasharray: 4 3; }
.lead2 { stroke: #3f8f30; stroke-width: 2; stroke-dasharray: 5 2; }
.mk-or { font-size: 30px; font-weight: 500; fill: #f5a623; }
.mk-w { font-size: 30px; font-weight: 400; fill: #fff; }
.mk-b { font-size: 34px; font-weight: 400; fill: #fff; }
.mk-g { font-size: 30px; font-weight: 500; fill: #0a9a0a; }
.bb { font-size: 29px; fill: #fff; fill-opacity: 0.6; }
.arw { font-size: 31px; fill: #000; }
.ic { fill: none; stroke: #555; stroke-width: 4; }
.ic-l { fill: none; stroke: #aaa; stroke-width: 4; }
.ic-l2 { fill: none; stroke: #c8c8c8; stroke-width: 3; }
.ticks line { stroke: #c8c8c8; stroke-width: 2; }
.xl { font-size: 35px; fill: #666; letter-spacing: 3px; }
.xl.faint { fill: #c8c8c8; }
.xbox { font-size: 31px; fill: #fff; }

.vol { position: relative; height: 211px; }
.volchart { width: 1080px; height: 211px; }
.vln { fill: none; stroke-width: 3.5; }
.vol-legend { position: absolute; left: 26px; top: 12px; font-size: 35.500px; white-space: nowrap; }
.vl-row { display: flex; align-items: center; height: 50px; }
.vl-btn { position: relative; width: 170px; height: 50px; box-sizing: border-box; padding-left: 14px; border-radius: 8px; background: #f0f0f0; font-size: 36px; line-height: 49px; color: #333; margin-right: 14px; }
.dd2 { position: absolute; left: 135px; top: 17px; width: 0; height: 0; border-left: 9px solid transparent; border-right: 9px solid transparent; border-top: 16px solid #777; }
.v-red { color: #d93a3a; width: 192px; flex: none; font-weight: 500; }
.v-dark { color: #333; width: 208px; flex: none; }
.v-or { color: #f07a40; width: 226px; flex: none; }
.v-mg { color: #c8407a; }
.vl-turn { font-size: 35px; line-height: 36px; color: #333; letter-spacing: 1px; }
.v-bl { color: #3aa5e8; }

.sheet { background: #fff; }
.sheet-head { display: flex; align-items: center; height: 73px; padding-left: 16px; font-size: 31px; white-space: nowrap; }
.sd { width: 180px; flex: none; color: #333; }
.sa { width: 167px; flex: none; color: #e8a838; }
.sc { color: #d93a3a; }
.sx { width: 26px; height: 26px; margin-left: auto; margin-right: 27px; }
.daychart { width: 1080px; height: 567px; }
.dg { stroke: #e0e0e0; stroke-width: 2; }
.dg2 { stroke: #e8eaee; stroke-width: 2; }
.l-avg { fill: none; stroke: #e8ad50; stroke-width: 4; }
.l-price { fill: none; stroke: #5b9ce8; stroke-width: 4; }
.dl { font-size: 35px; }
.tl { font-size: 28px; fill: #555; }
.vt { font-size: 27px; fill: #777; }
.pager { display: flex; align-items: center; height: 89px; padding: 0 189px 0 187px; }
.pchev { width: 20px; height: 34px; }
.ptext { font-size: 43px; color: #333; margin-left: 22px; white-space: nowrap; }
.ptext.pnext { margin-left: auto; margin-right: 22px; }

.sysnav { display: flex; align-items: center; gap: 233px; height: 133px; padding-left: 249px; background: #262626; }
.n1 { width: 36px; height: 36px; }
.n2 { width: 34px; height: 36px; }
.n3 { width: 32px; height: 36px; }
</style>
